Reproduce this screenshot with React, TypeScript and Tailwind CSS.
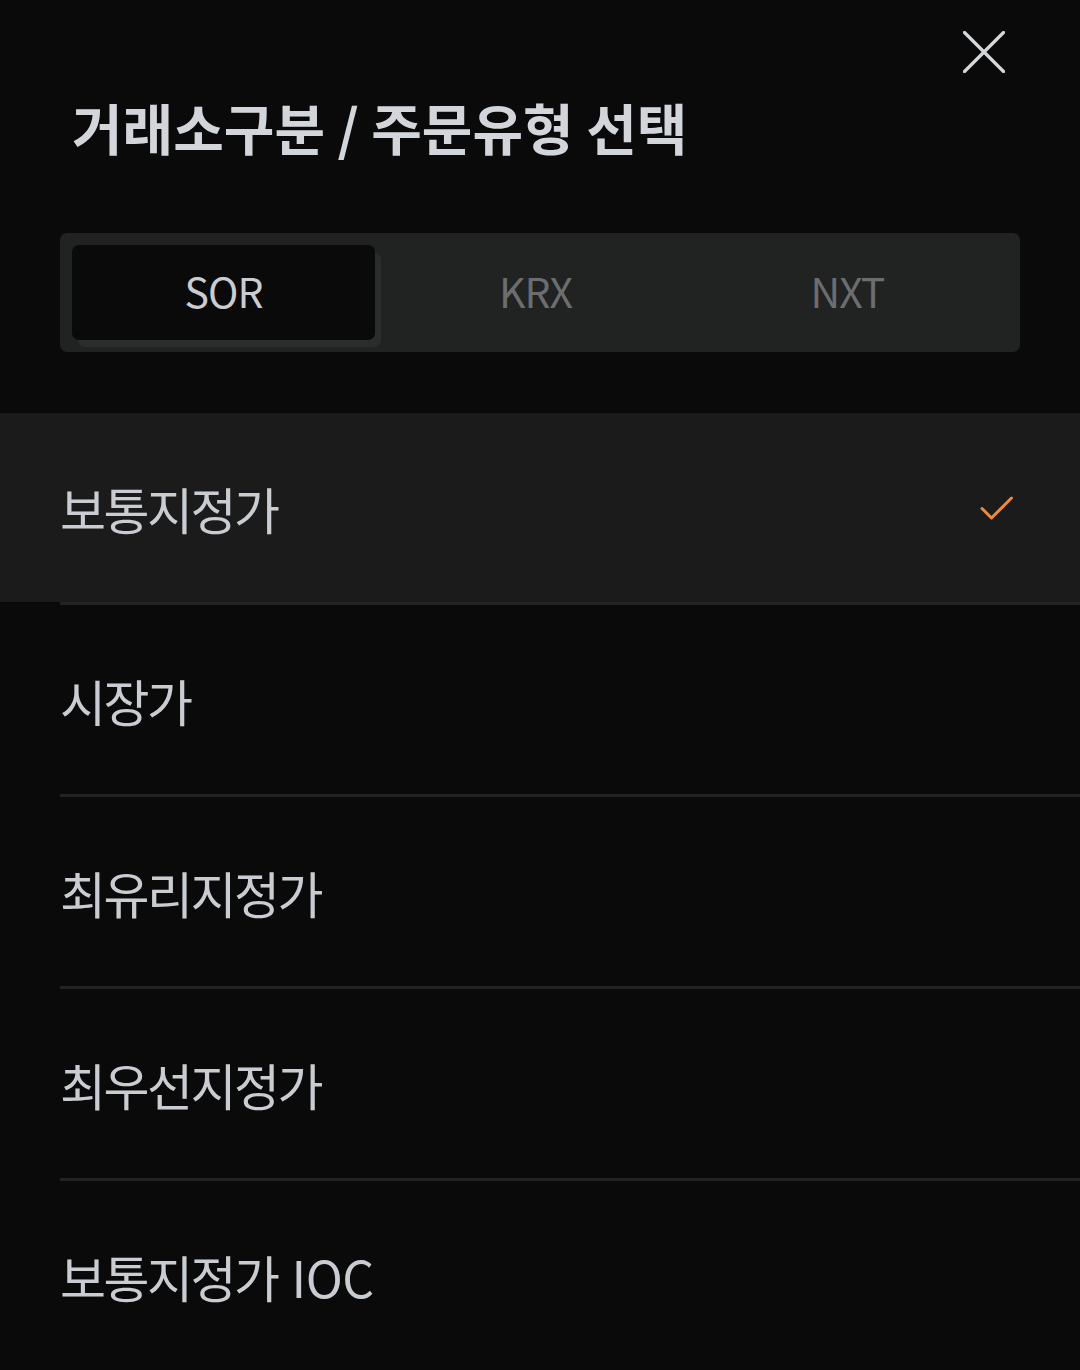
import React from "react";

const ITEMS = ["보통지정가", "시장가", "최유리지정가", "최우선지정가", "보통지정가 IOC"];

export default function App() {
  const [tab, setTab] = React.useState(0);
  const [sel, setSel] = React.useState(0);
  const tabs = ["SOR", "KRX", "NXT"];
  return (
    <div
      className="w-[1080px] h-[1370px] overflow-hidden bg-[#0a0a0a] text-[#c9cdd1]"
      style={{ fontFamily: '"Noto Sans CJK KR", "Noto Sans", sans-serif' }}
    >
      <div className="flex justify-end pt-[31px] pr-[75px]">
        <button className="w-[42px] h-[42px] flex items-center justify-center">
          <svg width="42" height="42" viewBox="0 0 42 42" fill="none">
            <path d="M1.5 1.5 L40.5 40.5 M40.5 1.5 L1.5 40.5" stroke="#d4d7da" strokeWidth="3.2" strokeLinecap="round" />
          </svg>
        </button>
      </div>
      <h1 className="mt-[17px] ml-[72px] text-[55px] leading-[72px] font-bold tracking-[0px] text-[#d2d6da]">
        거래소구분 / 주문유형 선택
      </h1>
      <div className="mt-[71px] mx-[60px] h-[119px] rounded-[7px] bg-[#212222] p-[12px] flex">
        {tabs.map((t, i) => (
          <button
            key={t}
            onClick={() => setTab(i)}
            className="w-[312px] h-[95px] flex items-start"
          >
            <span
              className={
                "w-[303px] h-[95px] pb-[3px] rounded-[7px] flex items-center justify-center text-[41px] tracking-[-1px] " +
                (tab === i
                  ? "bg-[#0a0a0a] text-[#c9cdd1] shadow-[6px_7px_0_#2b2c2c]"
                  : "text-[#6b6d6e]")
              }
            >
              {t}
            </span>
          </button>
        ))}
      </div>
      <div className="mt-[61px]">
        {ITEMS.map((it, i) => {
          const [ko, en] = it.split(" ");
          return (
            <div key={it} onClick={() => setSel(i)}>
              <div
                className={
                  "h-[189px] pl-[60px] pr-[66px] flex items-center justify-between " +
                  (sel === i ? "bg-[#1b1b1b]" : "")
                }
              >
                <span className="text-[50px] leading-none">
                  <span className="tracking-[-2.5px]">{ko}</span>
                  {en && <span className="ml-[14px] tracking-[-0.5px]">{en}</span>}
                </span>
                {sel === i && (
                  <svg width="34" height="26" viewBox="0 0 34 26" fill="none">
                    <path d="M2 13.5 L11.5 23 L31.5 3" stroke="#f0893a" strokeWidth="3" strokeLinecap="round" strokeLinejoin="round" />
                  </svg>
                )}
              </div>
              {i < ITEMS.length - 1 && <div className="ml-[60px] h-[3px] bg-[#232323]" />}
            </div>
          );
        })}
      </div>
    </div>
  );
}
